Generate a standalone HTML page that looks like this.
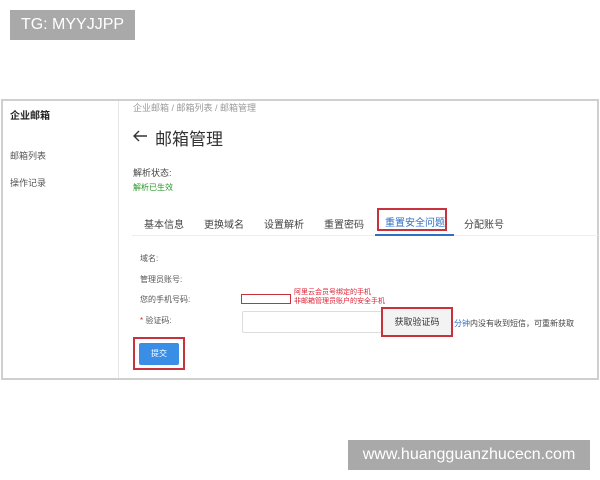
<!DOCTYPE html>
<html><head><meta charset="utf-8"><style>
*{margin:0;padding:0;box-sizing:border-box}
body{width:600px;height:480px;background:#fff;position:relative;overflow:hidden;font-family:"Liberation Sans","Noto Sans CJK SC",sans-serif;color:#333}
.a{position:absolute;white-space:nowrap}
.tag{background:#a9a9a9;color:#fff}
.red{border:2px solid #c8323c}
</style></head><body>
<div class="a tag" style="left:10px;top:10px;width:125px;height:30px;font-size:16px;line-height:30px;text-align:center">TG: MYYJJPP</div>
<div class="a tag" style="left:348px;top:440px;width:242px;height:30px;font-size:16px;line-height:30px;text-align:center">www.huangguanzhucecn.com</div>

<div class="a" style="left:1px;top:99px;width:598px;height:281px;border:2px solid #cfcfcf"></div>
<div class="a" style="left:118px;top:101px;width:1px;height:277px;background:#e6e6e6"></div>

<div class="a" style="left:10px;top:107px;font-size:10px;font-weight:bold;color:#222">企业邮箱</div>
<div class="a" style="left:10px;top:149px;font-size:9px;color:#555">邮箱列表</div>
<div class="a" style="left:10px;top:176px;font-size:9px;color:#555">操作记录</div>

<div class="a" style="left:133px;top:101px;font-size:9px;color:#999">企业邮箱 / 邮箱列表 / 邮箱管理</div>
<svg class="a" style="left:132px;top:129px" width="16" height="14" viewBox="0 0 16 14"><path d="M15 7H2M7 2L2 7l5 5" fill="none" stroke="#333" stroke-width="1.4"/></svg>
<div class="a" style="left:155px;top:125px;font-size:17px;color:#333">邮箱管理</div>
<div class="a" style="left:133px;top:166px;font-size:9px;color:#444">解析状态:</div>
<div class="a" style="left:133px;top:182px;font-size:8px;color:#2a9a2a">解析已生效</div>

<div class="a" style="left:132px;top:235px;width:466px;height:1px;background:#eee"></div>
<div class="a" style="left:144px;top:216px;font-size:10px;color:#444">基本信息</div>
<div class="a" style="left:204px;top:216px;font-size:10px;color:#444">更换域名</div>
<div class="a" style="left:264px;top:216px;font-size:10px;color:#444">设置解析</div>
<div class="a" style="left:324px;top:216px;font-size:10px;color:#444">重置密码</div>
<div class="a red" style="left:377px;top:208px;width:70px;height:23px"></div>
<div class="a" style="left:385px;top:214px;font-size:10px;color:#2f6fc4">重置安全问题</div>
<div class="a" style="left:375px;top:234px;width:79px;height:2px;background:#2f6fc4"></div>
<div class="a" style="left:464px;top:216px;font-size:10px;color:#444">分配账号</div>

<div class="a" style="left:140px;top:253px;font-size:8px;color:#555">域名:</div>
<div class="a" style="left:140px;top:274px;font-size:8px;color:#555">管理员账号:</div>
<div class="a" style="left:140px;top:294px;font-size:8px;color:#555">您的手机号码:</div>
<div class="a" style="left:140px;top:315px;font-size:8px;color:#555"><span style="color:#c33">*</span> 验证码:</div>

<div class="a red" style="left:241px;top:294px;width:50px;height:10px;border-width:1.5px"></div>
<div class="a" style="left:294px;top:288px;font-size:7px;line-height:9px;color:#d23">阿里云会员号绑定的手机<br>非邮箱管理员账户的安全手机</div>

<div class="a" style="left:242px;top:311px;width:140px;height:22px;border:1px solid #ddd;border-radius:2px"></div>
<div class="a red" style="left:381px;top:307px;width:72px;height:30px"></div>
<div class="a" style="left:383px;top:309px;width:68px;height:26px;background:#f3f3f3;font-size:9px;line-height:26px;text-align:center;color:#333">获取验证码</div>
<div class="a" style="left:454px;top:318px;font-size:8px;color:#444"><span style="color:#2f6fc4">分钟</span>内没有收到短信，可重新获取</div>

<div class="a red" style="left:133px;top:337px;width:52px;height:33px"></div>
<div class="a" style="left:139px;top:343px;width:40px;height:22px;background:#3a8ee6;border-radius:2px;color:#fff;font-size:8px;line-height:22px;text-align:center">提交</div>
</body></html>
